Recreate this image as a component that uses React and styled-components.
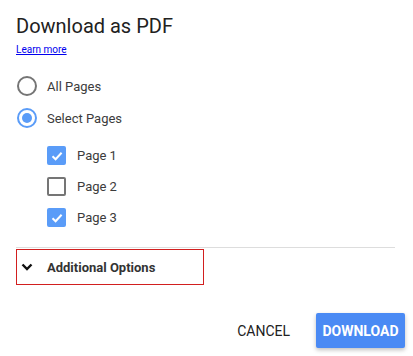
import styled, { createGlobalStyle } from "styled-components";

const GlobalStyle = createGlobalStyle`
  html, body {
    margin: 0;
    padding: 0;
    background: #ffffff;
    font-family: Roboto, "Liberation Sans", Arial, sans-serif;
  }
`;

const pages = [
  { label: "Page 1", checked: true },
  { label: "Page 2", checked: false },
  { label: "Page 3", checked: true },
];

export default function App() {
  return (
    <>
      <GlobalStyle />
      <DialogStyled>
        <TitleStyled>Download as PDF</TitleStyled>
        <LinkStyled href="#">Learn more</LinkStyled>

        <RadioGroupStyled>
          <RowStyled>
            <RadioStyled />
            <LabelStyled>All Pages</LabelStyled>
          </RowStyled>
          <RowStyled>
            <RadioStyled $selected />
            <LabelStyled>Select Pages</LabelStyled>
          </RowStyled>
        </RadioGroupStyled>

        <PageListStyled>
          {pages.map((page) => (
            <PageRowStyled key={page.label}>
              <CheckboxStyled $checked={page.checked}>
                {page.checked && (
                  <svg width="14" height="14" viewBox="0 0 14 14">
                    <polyline
                      points="2.5,7.2 5.6,10.2 11.6,3.8"
                      fill="none"
                      stroke="#ffffff"
                      strokeWidth="2"
                    />
                  </svg>
                )}
              </CheckboxStyled>
              <LabelStyled>{page.label}</LabelStyled>
            </PageRowStyled>
          ))}
        </PageListStyled>

        <DividerStyled />

        <OptionsToggleStyled>
          <svg width="12" height="8" viewBox="0 0 12 8">
            <polyline
              points="1.5,1.5 6,6 10.5,1.5"
              fill="none"
              stroke="#111111"
              strokeWidth="2.4"
            />
          </svg>
          <span>Additional Options</span>
        </OptionsToggleStyled>

        <FooterStyled>
          <TextButtonStyled>CANCEL</TextButtonStyled>
          <PrimaryButtonStyled>DOWNLOAD</PrimaryButtonStyled>
        </FooterStyled>
      </DialogStyled>
    </>
  );
}

const DialogStyled = styled.div`
  width: 413px;
  height: 356px;
  box-sizing: border-box;
  padding: 14px 18px 0 16px;
  display: flex;
  flex-direction: column;
`;

const TitleStyled = styled.h1`
  margin: 0;
  font-size: 20px;
  line-height: 24px;
  font-weight: 400;
  color: #212121;
`;

const LinkStyled = styled.a`
  align-self: flex-start;
  margin-top: 6px;
  font-size: 10px;
  line-height: 12px;
  color: #0000ee;
`;

const RadioGroupStyled = styled.div`
  margin-top: 14px;
  display: flex;
  flex-direction: column;
`;

const RowStyled = styled.div`
  height: 32px;
  display: flex;
  align-items: center;
  gap: 10px;
  padding-left: 1px;
`;

const RadioStyled = styled.span`
  width: 20px;
  height: 20px;
  box-sizing: border-box;
  border-radius: 50%;
  border: 2px solid ${(p) => (p.$selected ? "#5a9cf8" : "#757575")};
  display: flex;
  align-items: center;
  justify-content: center;

  &::after {
    content: "";
    display: ${(p) => (p.$selected ? "block" : "none")};
    width: 10px;
    height: 10px;
    border-radius: 50%;
    background: #5a9cf8;
  }
`;

const LabelStyled = styled.span`
  font-size: 13px;
  color: #3c3c3c;
`;

const PageListStyled = styled.div`
  margin-top: 6px;
  padding-left: 31px;
  display: flex;
  flex-direction: column;
`;

const PageRowStyled = styled.div`
  height: 31px;
  display: flex;
  align-items: center;
  gap: 11px;
`;

const CheckboxStyled = styled.span`
  width: 19px;
  height: 19px;
  box-sizing: border-box;
  border-radius: 2px;
  border: 2px solid ${(p) => (p.$checked ? "#5a9cf8" : "#757575")};
  background: ${(p) => (p.$checked ? "#5a9cf8" : "#ffffff")};
  display: flex;
  align-items: center;
  justify-content: center;
`;

const DividerStyled = styled.div`
  margin-top: 14px;
  height: 1px;
  background: #dddddd;
`;

const OptionsToggleStyled = styled.div`
  margin-top: 1px;
  width: 188px;
  height: 36px;
  box-sizing: border-box;
  border: 1px solid #d21f1f;
  display: flex;
  align-items: center;
  gap: 14px;
  padding-left: 4px;
  font-size: 13px;
  font-weight: 700;
  color: #333333;
`;

const FooterStyled = styled.div`
  margin-top: 28px;
  margin-right: -10px;
  display: flex;
  justify-content: flex-end;
  align-items: center;
  gap: 10px;
`;

const TextButtonStyled = styled.button`
  height: 35px;
  padding: 0 16px;
  border: none;
  background: transparent;
  font-family: Roboto, "Liberation Sans", Arial, sans-serif;
  font-size: 14px;
  color: #212121;
`;

const PrimaryButtonStyled = styled.button`
  width: 89px;
  height: 35px;
  padding: 0;
  border: none;
  border-radius: 2px;
  background: #4a8af4;
  color: #ffffff;
  font-family: Roboto, "Liberation Sans", Arial, sans-serif;
  font-size: 14px;
  font-weight: 700;
  box-shadow: 0 2px 4px rgba(0, 0, 0, 0.25);
`;
